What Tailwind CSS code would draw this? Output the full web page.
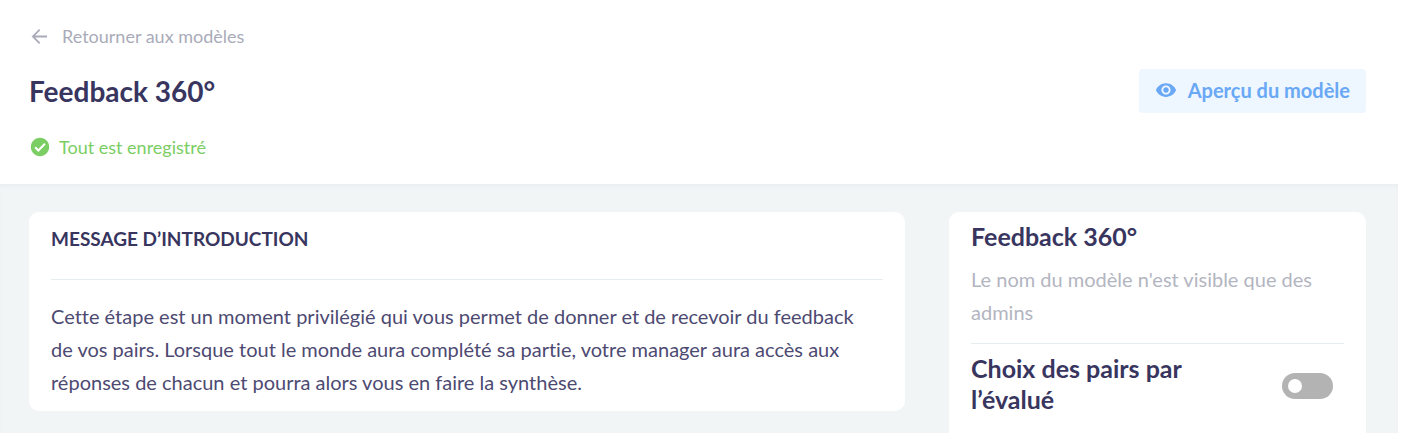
<!DOCTYPE html>
<html lang="fr">
<head>
<meta charset="utf-8">
<meta name="viewport" content="width=device-width, initial-scale=1">
<title>Feedback 360°</title>
<script src="https://cdn.jsdelivr.net/npm/@tailwindcss/browser@4"></script>
</head>
<body class="flex min-h-screen flex-col bg-white pr-1.5 pb-px font-['Lato',sans-serif] text-[#38355f] [font-variant-ligatures:none]">
  <header class="flex flex-col pt-5 pr-8 pb-[21px] pl-[29px]">
    <a href="#" class="flex items-center gap-3.5 self-start text-lg leading-8 text-[#a9abb9]">
      <svg class="ml-0.5 size-[17px]" viewBox="0 0 17 17" fill="none" stroke="currentColor" stroke-width="1.8" aria-hidden="true"><path d="M16 8.5H2M8.7 1.7 1.9 8.5l6.8 6.8"/></svg>
      Retourner aux modèles
    </a>
    <div class="mt-[17px] flex items-center justify-between">
      <h1 class="text-[28px] leading-10 font-bold">Feedback 360°</h1>
      <button type="button" class="flex h-11 items-center gap-[11px] rounded bg-[#eef6ff] px-4 pb-0.5 text-xl font-bold text-[#69a8f5]">
        <svg class="size-[22px]" viewBox="0 0 24 24" fill="currentColor" aria-hidden="true"><path d="M12 4.5C7 4.5 2.73 7.61 1 12c1.73 4.39 6 7.5 11 7.5s9.27-3.11 11-7.5c-1.73-4.39-6-7.5-11-7.5zM12 17c-2.76 0-5-2.24-5-5s2.24-5 5-5 5 2.24 5 5-2.24 5-5 5zm0-8c-1.66 0-3 1.34-3 3s1.34 3 3 3 3-1.34 3-3-1.34-3-3-3z"/></svg>
        Aperçu du modèle
      </button>
    </div>
    <p class="mt-[18px] flex items-center gap-2 text-lg leading-8 text-[#7bce64]">
      <svg class="size-[22px]" viewBox="0 0 24 24" fill="currentColor" aria-hidden="true"><path d="M12 2C6.48 2 2 6.48 2 12s4.48 10 10 10 10-4.48 10-10S17.52 2 12 2z"/><path d="m6.7 12.3 3.5 3.5 7.2-7.4" fill="none" stroke="#fff" stroke-width="2.2"/></svg>
      Tout est enregistré
    </p>
  </header>
  <main class="flex grow items-start gap-11 bg-[#f1f5f6] pt-7 pr-8 pl-[29px] inset-shadow-[0_4px_4px_-2px_#e9edf1]">
    <section class="min-w-0 flex-1 rounded-[10px] bg-white px-[22px] pt-[11px] pb-3">
      <h2 class="border-b border-[#e6edf0] pb-6 text-[19px] leading-8 font-bold">MESSAGE D’INTRODUCTION</h2>
      <p class="mt-5 text-xl leading-[33px] text-[#4d4a72]">Cette étape est un moment privilégié qui vous permet de donner et de recevoir du feedback<br>de vos pairs. Lorsque tout le monde aura complété sa partie, votre manager aura accès aux<br>réponses de chacun et pourra alors vous en faire la synthèse.</p>
    </section>
    <aside class="w-[417px] self-stretch rounded-t-[10px] bg-white px-[22px] pt-2">
      <h2 class="text-[25px] leading-8 font-bold">Feedback 360°</h2>
      <p class="mt-[11px] border-b border-[#e6edf0] pb-3.5 text-xl leading-[33px] text-[#b3b5c1]">Le nom du modèle n'est visible que des admins</p>
      <div class="flex items-end justify-between pt-[9px] pr-[11px] pb-3">
        <label for="peers" class="w-60 text-[25px] leading-[31px] font-bold">Choix des pairs par l’évalué</label>
        <input id="peers" type="checkbox" role="switch" class="mb-4 h-[26px] w-[51px] appearance-none rounded-full bg-[#b3b3b3] p-1.5 before:block before:size-3.5 before:rounded-full before:bg-white checked:bg-[#7bce64] checked:before:ml-auto">
      </div>
    </aside>
  </main>
</body>
</html>
